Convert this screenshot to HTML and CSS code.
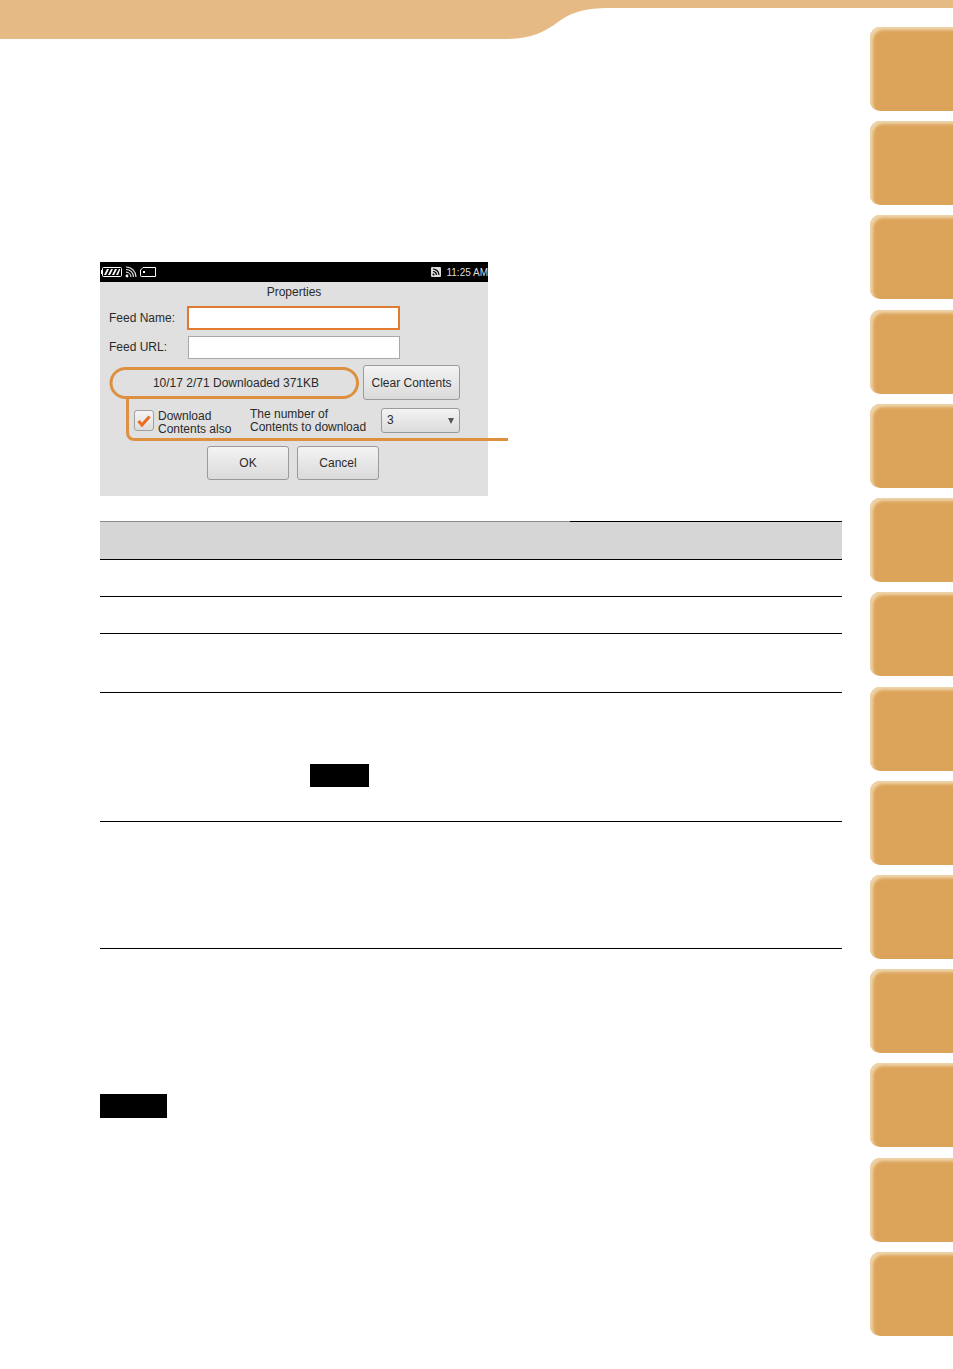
FILE: index.html
```html
<!DOCTYPE html>
<html lang="en">

<head>
    <title>Properties</title>
    <meta charset="UTF-8">
    <link rel="stylesheet" href="styles.css">
</head>

<body>
<div class="page">
    <!-- top banner -->
    <svg class="banner" width="953" height="39" viewBox="0 0 953 39">
        <path d="M0 0H953V8H610C585 8 572 12 558 22C545 32 530 39 505 39H0Z" fill="#e6ba85"/>
    </svg>

    <main class="content">
        <!-- device screenshot -->
        <div class="screen">
            <div class="status-bar">
                <div class="status-icons">
                    <svg width="21" height="10" viewBox="0 0 21 10">
                        <rect x="1.500" y="0.500" width="19" height="9" rx="1" fill="none" stroke="#fff"/>
                        <rect x="0" y="3" width="1.500" height="4" fill="#fff"/>
                        <path d="M3 8L6 2H8L5 8ZM7 8L10 2H12L9 8ZM11 8L14 2H16L13 8ZM15 8L18 2H19V3L17 8Z" fill="#fff"/>
                    </svg>
                    <svg width="12" height="12" viewBox="0 0 12 12">
                        <circle cx="2" cy="10" r="1.400" fill="#fff"/>
                        <path d="M1 6.200A5 5 0 0 1 6 11M1 3.500A7.500 7.500 0 0 1 8.500 11M1 1A10 10 0 0 1 11 11" fill="none" stroke="#ddd" stroke-width="1.200"/>
                    </svg>
                    <svg width="16" height="10" viewBox="0 0 16 10">
                        <path d="M3 .5H15.500V9.500H1.500A1 1 0 0 1 .5 8.500V3Z" fill="none" stroke="#fff"/>
                        <rect x="3" y="4" width="2" height="2" fill="#fff"/>
                    </svg>
                </div>
                <div class="status-right">
                    <svg width="10" height="10" viewBox="0 0 10 10">
                        <rect width="10" height="10" rx="1" fill="#ddd"/>
                        <circle cx="2.500" cy="7.500" r="1" fill="#000"/>
                        <path d="M2 4.500A3.500 3.500 0 0 1 5.500 8M2 2A6 6 0 0 1 8 8" fill="none" stroke="#000" stroke-width="1.200"/>
                    </svg>
                    <span>11:25 AM</span>
                </div>
            </div>

            <div class="dialog">
                <div class="dialog-title">Properties</div>
                <div class="field-row">
                    <label class="field-label">Feed Name:</label>
                    <div class="field-input active"></div>
                </div>
                <div class="field-row url-row">
                    <label class="field-label">Feed URL:</label>
                    <div class="field-input"></div>
                </div>
                <div class="status-row">
                    <div class="download-status">10/17 2/71 Downloaded 371KB</div>
                    <div class="btn clear-btn">Clear Contents</div>
                </div>
                <div class="option-row">
                    <div class="checkbox">
                        <svg width="14" height="12" viewBox="0 0 14 12">
                            <path d="M1.500 6L5 10L12.500 1.500" fill="none" stroke="#ee6a1f" stroke-width="3"/>
                        </svg>
                    </div>
                    <div class="option-text check-text">Download<br>Contents also</div>
                    <div class="option-text count-text">The number of<br>Contents to download</div>
                    <div class="select">
                        <span>3</span>
                        <i class="select-arrow"></i>
                    </div>
                </div>
                <div class="dialog-actions">
                    <div class="btn action-btn">OK</div>
                    <div class="btn action-btn">Cancel</div>
                </div>
            </div>

            <!-- callout drawn over the screenshot -->
            <svg class="callout" width="410" height="80" viewBox="0 0 410 80">
                <rect x="11" y="1.500" width="246.500" height="29" rx="14.500" fill="none" stroke="#dd9040" stroke-width="3"/>
                <path d="M27.500 31V65Q27.500 72.500 35 72.500H408" fill="none" stroke="#dd9040" stroke-width="3"/>
            </svg>
        </div>

        <!-- table -->
        <div class="table">
            <div class="table-head">
                <div class="head-rule">
                    <span class="rule-light"></span>
                    <span class="rule-dark"></span>
                </div>
            </div>
            <div class="table-row row-37"></div>
            <div class="table-row row-37"></div>
            <div class="table-row row-59"></div>
            <div class="table-row row-129">
                <span class="redacted inline-note"></span>
            </div>
            <div class="table-row row-127"></div>
        </div>

        <div class="redacted note-label"></div>
    </main>

    <!-- side tabs -->
    <aside class="tabs">
        <div class="tab"></div>
        <div class="tab"></div>
        <div class="tab"></div>
        <div class="tab"></div>
        <div class="tab"></div>
        <div class="tab"></div>
        <div class="tab"></div>
        <div class="tab"></div>
        <div class="tab"></div>
        <div class="tab"></div>
        <div class="tab"></div>
        <div class="tab"></div>
        <div class="tab"></div>
        <div class="tab"></div>
    </aside>
</div>
</body>

</html>
```

FILE: styles.css
```css
body {
    margin: 0;
    padding: 0;
    background-color: #ffffff;
    font-family: 'Liberation Sans', Arial, sans-serif;
}

.page {
    position: relative;
    display: flex;
    justify-content: space-between;
    width: 953px;
    height: 1369px;
    overflow: hidden;
}

.banner {
    position: absolute;
    top: 0;
    left: 0;
}

.content {
    width: 742px;
    padding: 262px 0 0 100px;
}

/* device screenshot */
.screen {
    position: relative;
    width: 388px;
    height: 234px;
    background-color: #e0e0e0;
    color: #2a2a2a;
    font-size: 12px;
}

.status-bar {
    display: flex;
    justify-content: space-between;
    align-items: center;
    height: 20px;
    background-color: #000000;
    color: #dddddd;
}

.status-icons {
    display: flex;
    align-items: center;
    gap: 3px;
    padding-left: 1px;
}

.status-right {
    display: flex;
    align-items: center;
    gap: 5px;
    font-size: 10px;
    white-space: nowrap;
}

.dialog {
    padding: 3px 9px 0;
}

.dialog-title {
    text-align: center;
    line-height: 14px;
    height: 21px;
}

.field-row {
    display: flex;
    align-items: center;
    height: 24px;
}

.url-row {
    margin-top: 6px;
    height: 23px;
}

.field-label {
    width: 79px;
}

.url-row .field-label {
    margin-top: -2px;
}

.field-input {
    box-sizing: border-box;
    width: 212px;
    height: 100%;
    background-color: #ffffff;
    border: 1px solid #a8a8a8;
}

.field-input.active {
    width: 213px;
    margin-left: -1px;
    border: 2px solid #e07a30;
}

.status-row {
    display: flex;
    align-items: center;
    margin-top: 6px;
}

.download-status {
    width: 254px;
    text-align: center;
}

.btn {
    display: flex;
    justify-content: center;
    align-items: center;
    box-sizing: border-box;
    background: linear-gradient(#f3f3f3, #dadada);
    border: 1px solid #9a9a9a;
    border-radius: 3px;
}

.clear-btn {
    width: 97px;
    height: 35px;
}

.option-row {
    display: flex;
    align-items: center;
    height: 35px;
    margin-top: 3px;
    padding-left: 25px;
    line-height: 13px;
}

.checkbox {
    display: flex;
    justify-content: center;
    align-items: center;
    box-sizing: border-box;
    width: 20px;
    height: 21px;
    background: linear-gradient(#f5f5f5, #dcdcdc);
    border: 1px solid #a0a0a0;
    border-radius: 3px;
}

.option-text {
    white-space: nowrap;
}

.check-text {
    width: 92px;
    margin: 4px 0 0 4px;
}

.count-text {
    width: 131px;
    margin-top: 1px;
}

.select {
    display: flex;
    justify-content: space-between;
    align-items: center;
    box-sizing: border-box;
    width: 79px;
    height: 25px;
    padding: 0 5px;
    background: linear-gradient(#f3f3f3, #dcdcdc);
    border: 1px solid #9a9a9a;
    border-radius: 3px;
}

.select-arrow {
    width: 0;
    height: 0;
    border-left: 3.500px solid transparent;
    border-right: 3.500px solid transparent;
    border-top: 6px solid #555555;
}

.dialog-actions {
    display: flex;
    justify-content: center;
    gap: 8px;
    margin-top: 8px;
    padding-right: 3px;
}

.action-btn {
    width: 82px;
    height: 34px;
    padding-left: 1px;
}

.callout {
    position: absolute;
    top: 105px;
    left: 0;
    overflow: visible;
    pointer-events: none;
}

/* table */
.table {
    margin-top: 25px;
}

.table-head {
    box-sizing: border-box;
    height: 39px;
    background-color: #d6d6d6;
    border-bottom: 1px solid #000000;
}

.head-rule {
    display: flex;
    height: 1px;
}

.rule-light {
    width: 470px;
    background-color: #8c8c8c;
}

.rule-dark {
    flex: 1;
    background-color: #000000;
}

.table-row {
    box-sizing: border-box;
    border-bottom: 1px solid #000000;
}

.row-37 {
    height: 37px;
}

.row-59 {
    height: 59px;
}

.row-129 {
    height: 129px;
    padding: 71px 0 0 210px;
}

.row-127 {
    height: 127px;
}

.redacted {
    display: block;
    background-color: #000000;
}

.inline-note {
    width: 59px;
    height: 23px;
}

.note-label {
    width: 67px;
    height: 24px;
    margin-top: 145px;
}

/* side tabs */
.tabs {
    display: flex;
    flex-direction: column;
    justify-content: space-between;
    box-sizing: border-box;
    width: 83px;
    height: 1309px;
    margin-top: 27px;
}

.tab {
    box-sizing: border-box;
    height: 84px;
    background-color: #dca45a;
    border-radius: 10px 0 0 10px;
    box-shadow: inset 3px 3px 3px #eed4aa;
}
```
